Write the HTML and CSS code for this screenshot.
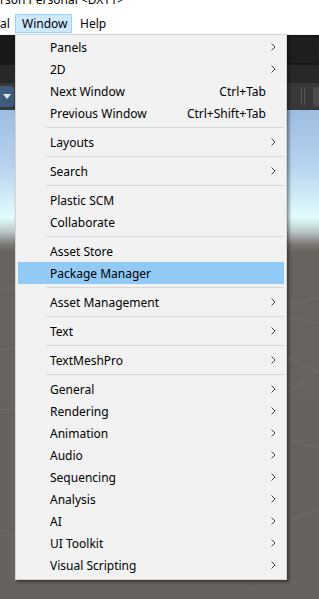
FILE: index.html
```html
<!DOCTYPE html>
<html lang="en">
<head>
    <meta charset="UTF-8">
    <meta name="viewport" content="width=device-width, initial-scale=1.0">
    <title>Unity - Window menu</title>
    <link rel="stylesheet" href="styles.css">
</head>
<body>

    <!-- Title bar (cut off at top) -->
    <div class="titlebar"><span class="title-text">rson Personal &lt;DX11&gt;</span></div>

    <!-- Menu bar -->
    <nav class="menubar">
        <span class="menubar-item cut">al</span>
        <span class="menubar-item open">Window</span>
        <span class="menubar-item">Help</span>
    </nav>

    <!-- Editor behind the menu -->
    <div class="editor">
        <div class="bar bar-top">
            <span></span>
            <span class="tool-box"></span>
        </div>
        <div class="bar bar-mid"></div>
        <div class="bar bar-scene">
            <span class="drop-btn">
                <svg width="8" height="5" viewBox="0 0 8 5"><path d="M0 0h8L4 5z" fill="#e6e6e6"/></svg>
            </span>
            <span class="scene-tools">
                <span class="grip"></span>
                <span class="scene-box"></span>
            </span>
        </div>
        <div class="scene">
            <svg class="grid" width="319" height="489" viewBox="0 0 319 489">
                <g stroke="#ffffff" stroke-opacity="0.07" fill="none">
                    <path d="M0 180 L60 170"/>
                    <path d="M0 240 L80 222"/>
                    <path d="M0 300 L50 295"/>
                    <path d="M290 195 L319 188"/>
                    <path d="M290 207 L319 213"/>
                    <path d="M288 282 L319 260"/>
                    <path d="M288 248 L319 262"/>
                    <path d="M290 330 L319 338"/>
                    <path d="M290 410 L319 400"/>
                    <path d="M0 420 L40 430"/>
                </g>
            </svg>
        </div>
    </div>

    <!-- Window dropdown menu -->
    <div class="menu">
        <div class="item"><span class="label">Panels</span><span class="key"></span><span class="arrow"><svg width="5" height="8" viewBox="0 0 5 8"><path d="M0.5 0.5L4 4L0.5 7.5" stroke="#404040" fill="none"/></svg></span></div>
        <div class="item"><span class="label">2D</span><span class="key"></span><span class="arrow"><svg width="5" height="8" viewBox="0 0 5 8"><path d="M0.5 0.5L4 4L0.5 7.5" stroke="#404040" fill="none"/></svg></span></div>
        <div class="item"><span class="label">Next Window</span><span class="key">Ctrl+Tab</span><span class="arrow"></span></div>
        <div class="item"><span class="label">Previous Window</span><span class="key">Ctrl+Shift+Tab</span><span class="arrow"></span></div>
        <div class="sep"></div>
        <div class="item"><span class="label">Layouts</span><span class="key"></span><span class="arrow"><svg width="5" height="8" viewBox="0 0 5 8"><path d="M0.5 0.5L4 4L0.5 7.5" stroke="#404040" fill="none"/></svg></span></div>
        <div class="sep"></div>
        <div class="item"><span class="label">Search</span><span class="key"></span><span class="arrow"><svg width="5" height="8" viewBox="0 0 5 8"><path d="M0.5 0.5L4 4L0.5 7.5" stroke="#404040" fill="none"/></svg></span></div>
        <div class="sep"></div>
        <div class="item"><span class="label">Plastic SCM</span><span class="key"></span><span class="arrow"></span></div>
        <div class="item"><span class="label">Collaborate</span><span class="key"></span><span class="arrow"></span></div>
        <div class="sep"></div>
        <div class="item"><span class="label">Asset Store</span><span class="key"></span><span class="arrow"></span></div>
        <div class="item active"><span class="label">Package Manager</span><span class="key"></span><span class="arrow"></span></div>
        <div class="sep"></div>
        <div class="item"><span class="label">Asset Management</span><span class="key"></span><span class="arrow"><svg width="5" height="8" viewBox="0 0 5 8"><path d="M0.5 0.5L4 4L0.5 7.5" stroke="#404040" fill="none"/></svg></span></div>
        <div class="sep"></div>
        <div class="item"><span class="label">Text</span><span class="key"></span><span class="arrow"><svg width="5" height="8" viewBox="0 0 5 8"><path d="M0.5 0.5L4 4L0.5 7.5" stroke="#404040" fill="none"/></svg></span></div>
        <div class="sep"></div>
        <div class="item"><span class="label">TextMeshPro</span><span class="key"></span><span class="arrow"><svg width="5" height="8" viewBox="0 0 5 8"><path d="M0.5 0.5L4 4L0.5 7.5" stroke="#404040" fill="none"/></svg></span></div>
        <div class="sep"></div>
        <div class="item"><span class="label">General</span><span class="key"></span><span class="arrow"><svg width="5" height="8" viewBox="0 0 5 8"><path d="M0.5 0.5L4 4L0.5 7.5" stroke="#404040" fill="none"/></svg></span></div>
        <div class="item"><span class="label">Rendering</span><span class="key"></span><span class="arrow"><svg width="5" height="8" viewBox="0 0 5 8"><path d="M0.5 0.5L4 4L0.5 7.5" stroke="#404040" fill="none"/></svg></span></div>
        <div class="item"><span class="label">Animation</span><span class="key"></span><span class="arrow"><svg width="5" height="8" viewBox="0 0 5 8"><path d="M0.5 0.5L4 4L0.5 7.5" stroke="#404040" fill="none"/></svg></span></div>
        <div class="item"><span class="label">Audio</span><span class="key"></span><span class="arrow"><svg width="5" height="8" viewBox="0 0 5 8"><path d="M0.5 0.5L4 4L0.5 7.5" stroke="#404040" fill="none"/></svg></span></div>
        <div class="item"><span class="label">Sequencing</span><span class="key"></span><span class="arrow"><svg width="5" height="8" viewBox="0 0 5 8"><path d="M0.5 0.5L4 4L0.5 7.5" stroke="#404040" fill="none"/></svg></span></div>
        <div class="item"><span class="label">Analysis</span><span class="key"></span><span class="arrow"><svg width="5" height="8" viewBox="0 0 5 8"><path d="M0.5 0.5L4 4L0.5 7.5" stroke="#404040" fill="none"/></svg></span></div>
        <div class="item"><span class="label">AI</span><span class="key"></span><span class="arrow"><svg width="5" height="8" viewBox="0 0 5 8"><path d="M0.5 0.5L4 4L0.5 7.5" stroke="#404040" fill="none"/></svg></span></div>
        <div class="item"><span class="label">UI Toolkit</span><span class="key"></span><span class="arrow"><svg width="5" height="8" viewBox="0 0 5 8"><path d="M0.5 0.5L4 4L0.5 7.5" stroke="#404040" fill="none"/></svg></span></div>
        <div class="item"><span class="label">Visual Scripting</span><span class="key"></span><span class="arrow"><svg width="5" height="8" viewBox="0 0 5 8"><path d="M0.5 0.5L4 4L0.5 7.5" stroke="#404040" fill="none"/></svg></span></div>
    </div>

</body>
</html>
```

FILE: styles.css
```css
/* General */
html, body {
    height: 100%;
}

body {
    margin: 0;
    font-family: "Noto Sans", "Noto Sans CJK KR", sans-serif;
    font-size: 12px;
    color: #000;
    background: #fff;
    display: flex;
    flex-direction: column;
    position: relative;
    overflow: hidden;
}

/* Title bar */
.titlebar {
    height: 13px;
    overflow: hidden;
    background: #fff;
}

.title-text {
    display: block;
    margin-top: -8px;
    line-height: 16px;
    white-space: nowrap;
    color: #000;
}

/* Menu bar */
.menubar {
    height: 21px;
    display: flex;
    align-items: center;
    background: #fff;
    border-bottom: 1px solid #f0f0f0;
}

.menubar-item {
    padding: 0 7px;
    height: 19px;
    line-height: 19px;
    box-sizing: border-box;
}

.menubar-item.cut {
    padding: 0;
    width: 15px;
}

.menubar-item.open {
    width: 57px;
    background: #cce8ff;
    border: 1px solid #99d1ff;
    line-height: 17px;
    padding: 0 6px;
    margin-right: 1px;
}

/* Editor behind */
.editor {
    flex: 1;
    display: flex;
    flex-direction: column;
}

.bar {
    display: flex;
    justify-content: space-between;
    align-items: center;
}

.bar-top {
    height: 30px;
    background: #191919;
}

.tool-box {
    width: 32px;
    height: 22px;
    background: #1e1e1e;
    border: 1px solid #222;
    border-radius: 3px;
}

.bar-mid {
    height: 18px;
    background: #282828;
}

.bar-scene {
    height: 27px;
    background: #383838;
}

.drop-btn {
    width: 14px;
    height: 21px;
    margin-left: -2px;
    background: #3f5b7c;
    border-radius: 3px;
    display: flex;
    align-items: center;
    justify-content: center;
    padding-left: 2px;
}

.scene-tools {
    display: flex;
    align-items: center;
    gap: 8px;
}

.grip {
    width: 2px;
    height: 17px;
    border-left: 1px solid #555;
    border-right: 1px solid #555;
}

.scene-box {
    width: 6px;
    height: 20px;
    background: #4a4a4a;
    border-radius: 3px 0 0 3px;
}

.scene {
    flex: 1;
    background: linear-gradient(#9dbde1 0px, #b6d2ee 55px, #dcf7fb 100px, #e2fbfd 108px, #b8c6c6 122px, #7c7a76 134px, #68635e 142px, #67625d 100%);
    overflow: hidden;
}

.grid {
    display: block;
}

/* Dropdown menu */
.menu {
    position: absolute;
    left: 15px;
    top: 34px;
    width: 270px;
    padding: 1px 0 3px;
    background: #f2f2f2;
    border: 1px solid #d5d5d5;
    box-shadow: 2px 2px 3px rgba(0, 0, 0, 0.45);
}

.item {
    height: 22px;
    margin: 0 2px;
    padding-left: 32px;
    display: flex;
    align-items: center;
    white-space: nowrap;
}

.item.active {
    background: #91c9f7;
}

.label {
    flex: 1;
}

.arrow {
    width: 13px;
    padding-left: 5px;
    display: flex;
    align-items: center;
}

.sep {
    height: 1px;
    margin: 3px 2px 3px 30px;
    background: #d7d7d7;
}
```
